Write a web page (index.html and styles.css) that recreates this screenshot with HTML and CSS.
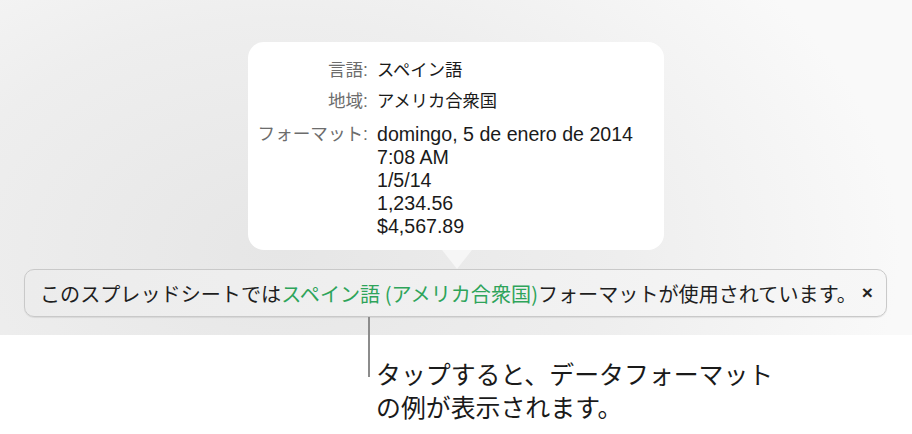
FILE: index.html
```html
<!DOCTYPE html>
<html lang="ja">
<head>
    <meta charset="UTF-8">
    <meta name="viewport" content="width=device-width, initial-scale=1.0">
    <title>フォーマット</title>
    <link rel="stylesheet" href="styles.css">
</head>
<body>
    <div class="scene">
        <div class="popover">
            <div class="row">
                <span class="label">言語:</span>
                <span class="value jp">スペイン語</span>
            </div>
            <div class="row">
                <span class="label">地域:</span>
                <span class="value jp">アメリカ合衆国</span>
            </div>
            <div class="row">
                <span class="label">フォーマット:</span>
                <span class="value">
                    domingo, 5 de enero de 2014<br>
                    7:08 AM<br>
                    1/5/14<br>
                    1,234.56<br>
                    $4,567.89
                </span>
            </div>
        </div>

        <div class="banner">
            <span class="message">このスプレッドシートでは<span class="accent">スペイン語 (アメリカ合衆国)</span>フォーマットが使用されています。</span>
            <span class="close">×</span>
        </div>

        <div class="callout">
            <div class="callout-line"></div>
            <p class="callout-text">タップすると、データフォーマット<br>の例が表示されます。</p>
        </div>
    </div>
</body>
</html>
```

FILE: styles.css
```css
body {
    margin: 0;
    background: #fff;
    font-family: "Liberation Sans", "Noto Sans CJK JP", sans-serif;
    color: #1c1c1c;
}
.scene {
    width: 912px;
    height: 434px;
    padding-top: 42px;
    box-sizing: border-box;
    background:
        radial-gradient(ellipse 620px 420px at 280px 250px, #e6e6e6 0%, #eeeeee 55%, #f9f9f9 100%) 0 0 / 100% 335px no-repeat,
        #fff;
}
.popover {
    position: relative;
    width: 416px;
    margin: 0 auto;
    padding: 17px 0 12px;
    box-sizing: border-box;
    background: #fff;
    border-radius: 16px;
    display: flex;
    flex-direction: column;
    gap: 8px;
}
.popover::after {
    content: "";
    position: absolute;
    left: 194px;
    bottom: -19px;
    border-left: 15px solid transparent;
    border-right: 15px solid transparent;
    border-top: 19px solid rgba(255, 255, 255, 0.55);
}
.row {
    display: grid;
    grid-template-columns: 120px 1fr;
    column-gap: 9px;
    font-size: 19.6px;
    line-height: 23px;
}
.row:last-child {
    margin-top: 2px;
}
.label {
    text-align: right;
    color: #6c6c6c;
    font-size: 17.6px;
}
.value {
    color: #1a1a1a;
}
.value.jp {
    font-size: 17.3px;
}
.banner {
    margin: 19px 25px 0 24px;
    height: 48px;
    box-sizing: border-box;
    padding: 0 14px 0 15px;
    display: flex;
    align-items: center;
    gap: 5px;
    white-space: nowrap;
    border: 1px solid #c9c9c9;
    border-radius: 10px;
    background: linear-gradient(to right, #ececec, #f1f1f1 60%, #f7f7f7);
    box-shadow: 0 1px 1px rgba(0, 0, 0, 0.08);
    font-family: "Noto Sans CJK JP", sans-serif;
    font-size: 20.1px;
    color: #1e1e1e;
}
.accent {
    color: #2ea45a;
}
.close {
    font-family: "Liberation Sans", sans-serif;
    font-weight: bold;
    font-size: 19px;
    color: #222;
}
.callout {
    display: flex;
    margin-left: 368px;
}
.callout-line {
    width: 2px;
    height: 60px;
    background: #8c8c8c;
}
.callout-text {
    margin: 40px 0 0 6px;
    font-family: "Noto Sans CJK JP", sans-serif;
    font-size: 24.9px;
    line-height: 33px;
    color: #1a1a1a;
}
```
